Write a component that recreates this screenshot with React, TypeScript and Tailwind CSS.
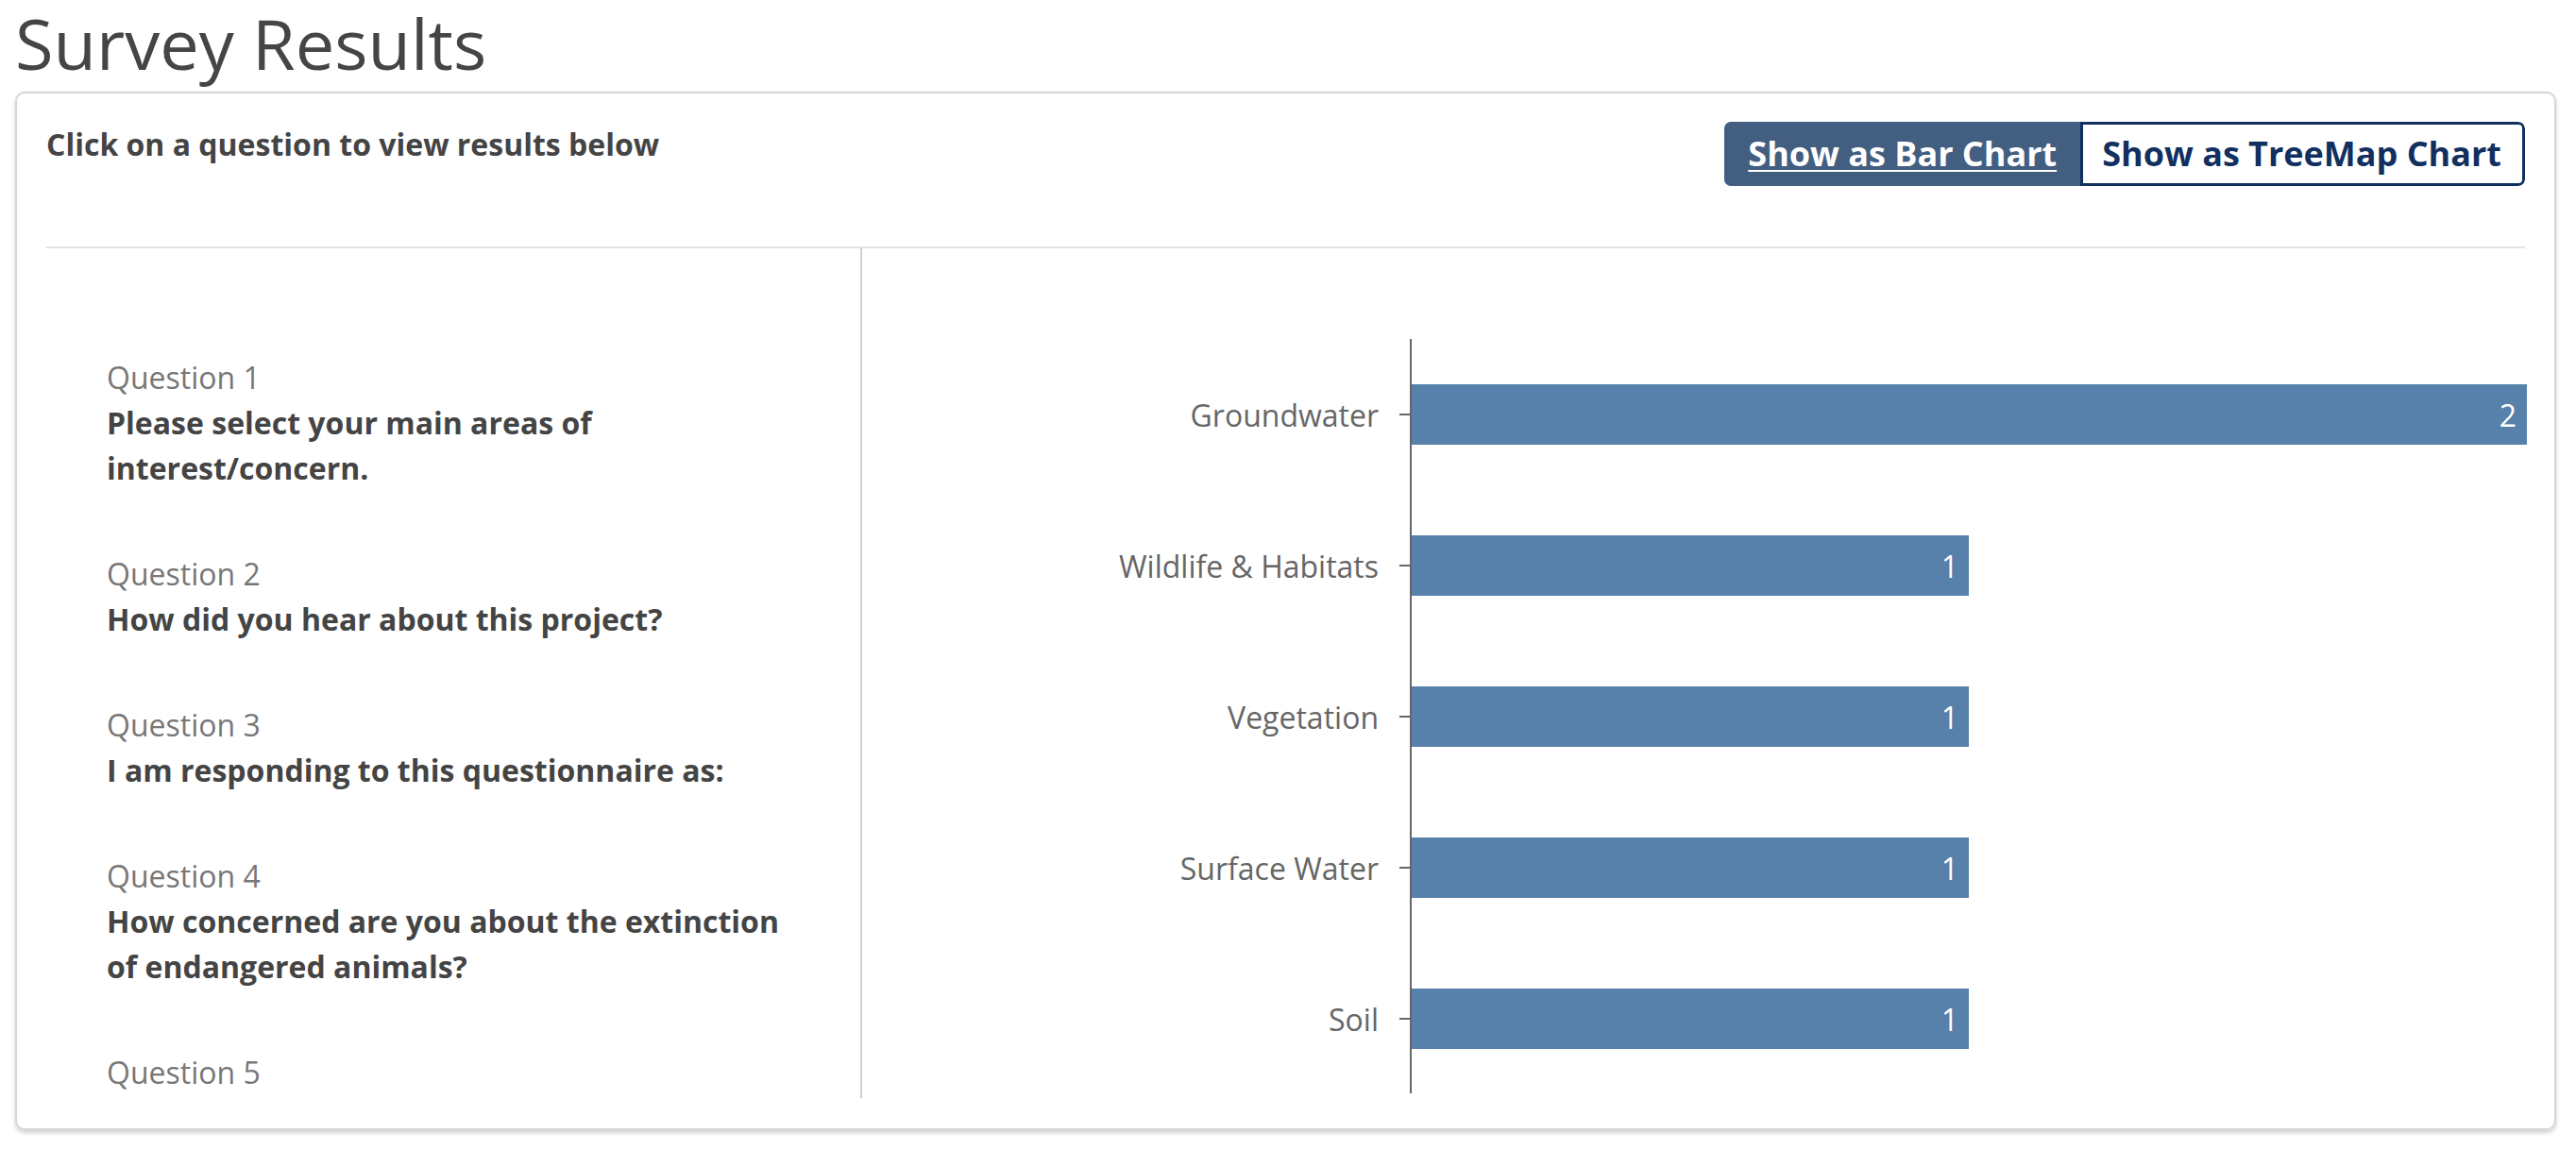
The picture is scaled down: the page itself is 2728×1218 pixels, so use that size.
import React from "react";

const questions: { n: number; text?: string }[] = [
  { n: 1, text: "Please select your main areas of interest/concern." },
  { n: 2, text: "How did you hear about this project?" },
  { n: 3, text: "I am responding to this questionnaire as:" },
  { n: 4, text: "How concerned are you about the extinction of endangered animals?" },
  { n: 5 },
];

const data = [
  { label: "Groundwater", value: 2 },
  { label: "Wildlife & Habitats", value: 1 },
  { label: "Vegetation", value: 1 },
  { label: "Surface Water", value: 1 },
  { label: "Soil", value: 1 },
];

function Chart() {
  const axisX = 581;
  const unit = 591;
  return (
    <svg
      width={1770}
      height={900}
      className="overflow-visible"
      style={{ fontFamily: "'Open Sans', sans-serif" }}
    >
      {data.map((d, i) => {
        const top = 144 + 160 * i;
        const cy = top + 32;
        const end = axisX + d.value * unit;
        return (
          <g key={d.label}>
            <rect x={axisX} y={top} width={d.value * unit} height={64} fill="#5780aa" />
            <line x1={axisX - 12} x2={axisX} y1={cy} y2={cy} stroke="#666" strokeWidth={2} />
            <text x={547} y={cy} textAnchor="end" dominantBaseline="central" fontSize={32} fill="#666">
              {d.label}
            </text>
            <text x={end - 11} y={cy} textAnchor="end" dominantBaseline="central" fontSize={32} fill="#ffffff">
              {d.value}
            </text>
          </g>
        );
      })}
      <line x1={axisX} x2={axisX} y1={96} y2={895} stroke="#666" strokeWidth={2} />
    </svg>
  );
}

export default function App() {
  return (
    <div className="min-h-screen bg-white pl-4 pr-[21px] font-['Open_Sans',sans-serif] text-[#444]">
      <h1 className="text-[74px] font-normal leading-[92px] mb-[5px] text-[#454545]">Survey Results</h1>
      <div className="rounded-[10px] border-2 border-[#d6d6d6] shadow-[0_3px_4px_rgba(0,0,0,0.18)] px-[31px] pt-[30px] pb-[32px]">
        <div className="flex justify-between items-start">
          <p className="text-[32px] font-bold leading-[48px] text-[#444]">
            Click on a question to view results below
          </p>
          <div className="flex h-[68px] rounded-[7px] overflow-hidden">
            <button className="bg-[#425e81] text-white text-[36px] font-bold underline decoration-2 underline-offset-[4px] px-[25px]">
              Show as Bar Chart
            </button>
            <button className="bg-white text-[#12305f] text-[36px] font-bold border-[3px] border-[#12305f] rounded-r-[7px] pl-[20px] pr-[22px]">
              Show as TreeMap Chart
            </button>
          </div>
        </div>
        <div className="mt-[64px] border-t-2 border-[#e2e2e2] flex h-[902px]">
          <div className="w-[864px] shrink-0 border-r-2 border-[#d0d0d0] overflow-hidden pl-16 pr-16 pt-[113px]">
            {questions.map((q) => (
              <div key={q.n} className="mb-16 cursor-pointer">
                <div className="text-[32px] leading-[48px] text-[#777]">Question {q.n}</div>
                {q.text && (
                  <div className="text-[32px] leading-[48px] font-bold text-[#444]">{q.text}</div>
                )}
              </div>
            ))}
          </div>
          <div className="flex-1 min-w-0">
            <Chart />
          </div>
        </div>
      </div>
    </div>
  );
}
